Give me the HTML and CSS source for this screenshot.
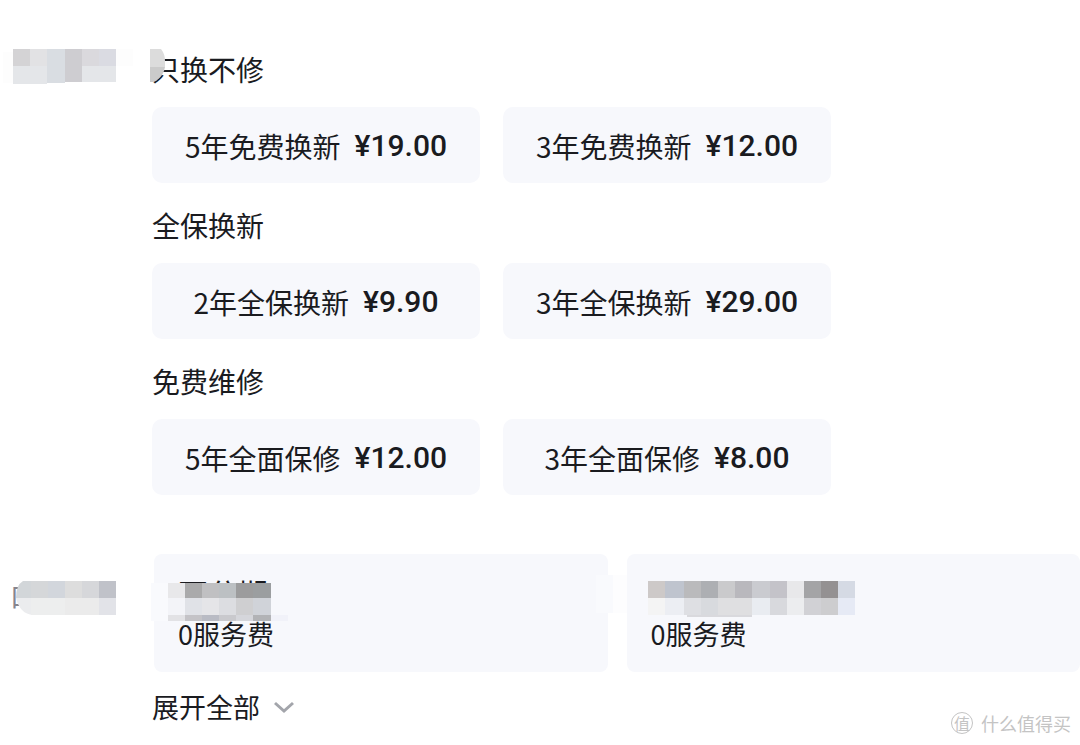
FILE: index.html
```html
<!DOCTYPE html>
<html lang="zh-CN">
<head>
<meta charset="utf-8">
<title>服务选择</title>
<link rel="stylesheet" href="styles.css">
</head>
<body>
<main class="page">
  <section class="row">
    <div class="row-label">
      <svg class="mosaic" width="133" height="35" viewBox="0 49 133 35" shape-rendering="crispEdges" aria-hidden="true">
        <path fill="#fdfdfd" d="M3 52h10v31H3zM116 49h17v17h-17z"/>
        <path fill="#d4d3d5" d="M13 49h17v17H13z"/><path fill="#e2e2e4" d="M30 49h17v17H30z"/><path fill="#d9dde2" d="M47 49h18v34H47z"/><path fill="#cecdd1" d="M65 49h17v33H65z"/><path fill="#dad9dd" d="M82 49h17v17H82z"/><path fill="#dadbe2" d="M99 49h17v17H99z"/>
        <path fill="#e4e6e9" d="M13 66h34v18H13zM82 66h34v16H82z"/>
      </svg>
    </div>
    <div class="plans">
      <h2 class="plan-title">只换不修
        <svg class="mosaic title-cover" width="16" height="34" viewBox="150 49 16 34" aria-hidden="true"><path fill="#dcdcdc" d="M150 49h11q4 5 4 12v6h-15z"/><path fill="#cbcbcb" d="M150 67h15q-1 8-9 14l-3 1h-3z"/></svg>
      </h2>
      <div class="options">
        <button class="option" type="button"><span>5年免费换新</span><span class="price">¥19.00</span></button>
        <button class="option" type="button"><span>3年免费换新</span><span class="price">¥12.00</span></button>
      </div>
      <h2 class="plan-title">全保换新</h2>
      <div class="options">
        <button class="option" type="button"><span>2年全保换新</span><span class="price">¥9.90</span></button>
        <button class="option" type="button"><span>3年全保换新</span><span class="price">¥29.00</span></button>
      </div>
      <h2 class="plan-title">免费维修</h2>
      <div class="options">
        <button class="option" type="button"><span>5年全面保修</span><span class="price">¥12.00</span></button>
        <button class="option" type="button"><span>3年全面保修</span><span class="price">¥8.00</span></button>
      </div>
    </div>
  </section>

  <section class="row finance">
    <div class="row-label finance-label">
      <span>口</span>
      <svg class="mosaic label-cover" width="100" height="34" viewBox="16 581 100 34" aria-hidden="true">
        <path fill="#d2d6d9" d="M23 581h8v17H16q0-13 7-17z"/><path fill="#ebecee" d="M16 598h17v17q-13-1-17-17z"/>
        <g shape-rendering="crispEdges"><path fill="#d5d7d9" d="M31 581h17v17H31z"/><path fill="#d2d6dc" d="M48 581h17v17H48z"/><path fill="#ddd" d="M65 581h17v17H65z"/><path fill="#d6d7da" d="M82 581h17v17H82z"/><path fill="#c0c2c9" d="M99 581h17v17H99z"/><path fill="#edeeee" d="M31 598h34v17H31z"/><path fill="#ebebeb" d="M65 598h34v17H65z"/><path fill="#e2e3e8" d="M99 598h17v17H99z"/></g>
      </svg>
    </div>
    <div class="finance-body">
      <div class="services">
        <button class="service" type="button">
          <span class="service-title">不分期</span>
          <span>0服务费</span>
          <svg class="mosaic service-cover" width="137" height="38" viewBox="151 583 137 38" shape-rendering="crispEdges" aria-hidden="true">
            <path fill="#f9fafd" d="M151 583h17v38h-17z"/><path fill="#f1f2f9" d="M271 615h17v6h-17z"/>
            <path fill="#e8e8ea" d="M168 583h17v15h-17z"/><path fill="#aaaaab" d="M185 583h17v15h-17z"/><path fill="#c0c0c2" d="M202 583h17v15h-17z"/><path fill="#bcc0c3" d="M219 583h17v15h-17z"/><path fill="#9c9c9d" d="M236 583h17v15h-17z"/><path fill="#9b9ea0" d="M253 583h18v15h-18z"/>
            <path fill="#f3f4f8" d="M168 598h17v17h-17z"/><path fill="#e0e2e7" d="M185 598h17v17h-17z"/><path fill="#e5e5e8" d="M202 598h17v17h-17z"/><path fill="#dcdde1" d="M219 598h17v17h-17z"/><path fill="#cfcfd1" d="M236 598h17v17h-17z"/><path fill="#d0d3d9" d="M253 598h18v17h-18z"/>
            <path fill="#e2e2e5" d="M168 615h17v6h-17z"/><path fill="#c4c3c7" d="M185 615h17v6h-17z"/><path fill="#b9bbc4" d="M202 615h17v6h-17z"/><path fill="#c9c9cd" d="M219 615h17v6h-17z"/><path fill="#d5d6db" d="M236 615h17v6h-17z"/><path fill="#b2b3b6" d="M253 615h18v6h-18z"/>
          </svg>
          <svg class="mosaic edge-cover" width="34" height="38" viewBox="0 0 34 38" aria-hidden="true"><path fill="#f9fafd" d="M0 0h17v38H0z"/><path fill="#fdfdfe" d="M17 0h17v38H17z"/></svg>
        </button>
        <button class="service" type="button">
          <span class="service-name">
            <svg class="mosaic" width="207" height="36" viewBox="648 581 207 36" shape-rendering="crispEdges" aria-hidden="true">
              <path fill="#cdc9c8" d="M648 581h17v17h-17z"/><path fill="#bfc4ce" d="M665 581h19v17h-19z"/><path fill="#bababc" d="M684 581h17v17h-17z"/><path fill="#adafb3" d="M701 581h17v17h-17z"/><path fill="#cacacc" d="M718 581h17v17h-17z"/><path fill="#b9b8bd" d="M735 581h17v17h-17z"/><path fill="#cacbd0" d="M752 581h18v17h-18z"/><path fill="#c4c3c9" d="M770 581h17v17h-17z"/><path fill="#e8e8ea" d="M787 581h17v17h-17z"/><path fill="#a4a4a6" d="M804 581h17v17h-17z"/><path fill="#949192" d="M821 581h17v17h-17z"/><path fill="#d5dae4" d="M838 581h17v17h-17z"/>
              <path fill="#f4f4f4" d="M648 598h17v17h-17z"/><path fill="#eceef3" d="M665 598h19v17h-19z"/><path fill="#dedfe3" d="M684 598h17v17h-17z"/><path fill="#d8dade" d="M701 598h17v17h-17z"/><path fill="#dfdfe1" d="M718 598h34v17h-34z"/><path fill="#e9ecf1" d="M752 598h18v17h-18z"/><path fill="#d8d9dd" d="M770 598h17v17h-17z"/><path fill="#ecedef" d="M787 598h17v17h-17z"/><path fill="#d1d1d5" d="M804 598h17v17h-17z"/><path fill="#cdcdcf" d="M821 598h17v17h-17z"/><path fill="#e6eaf5" d="M838 598h17v17h-17z"/><path fill="#d9d9dd" d="M687 615h65v2h-65z"/>
            </svg>
          </span>
          <span>0服务费</span>
        </button>
      </div>
      <button class="expand" type="button">展开全部
        <svg width="22" height="14" viewBox="0 0 22 14" fill="none" stroke="#a3a5ab" stroke-width="3" aria-hidden="true"><path d="M2 3l9 8 9-8"/></svg>
      </button>
    </div>
  </section>
</main>
<div class="watermark"><span class="watermark-logo">值</span><span>什么值得买</span></div>
</body>
</html>
```
FILE: styles.css
```css
* {
  box-sizing: border-box;
}

body {
  margin: 0;
  min-height: 100vh;
  position: relative;
  background: #fff;
  color: #1a1b1f;
  font-family: "Noto Sans CJK SC", sans-serif;
}

button {
  border: 0;
  padding: 0;
  color: inherit;
  font: inherit;
  cursor: pointer;
}

.page {
  padding: 49px 0 16px;
}

.row {
  display: grid;
  grid-template-columns: 152px minmax(0, 1fr);
}

.mosaic {
  display: block;
}

.plan-title {
  position: relative;
  margin: 0 0 18px;
  font-size: 28px;
  font-weight: 400;
  line-height: 40px;
}

.title-cover {
  position: absolute;
  top: 0;
  left: -2px;
}

.options {
  display: grid;
  grid-template-columns: repeat(2, minmax(0, 328px));
  gap: 23px;
  margin-bottom: 22px;
}

.option {
  display: flex;
  align-items: center;
  justify-content: center;
  gap: 14px;
  min-height: 76px;
  padding-top: 2px;
  border-radius: 10px;
  background: #f7f8fc;
  font-size: 28px;
  line-height: 40px;
  white-space: nowrap;
}

.price {
  font-family: Roboto, sans-serif;
  font-size: 30px;
  font-weight: 500;
}

.finance {
  margin-top: 37px;
}

.finance-label {
  position: relative;
  padding: 22px 0 0 10px;
  color: #85858f;
  font-size: 27px;
  line-height: 40px;
}

.label-cover {
  position: absolute;
  top: 27px;
  left: 16px;
}

.services {
  display: grid;
  grid-template-columns: repeat(2, minmax(0, 1fr));
  gap: 19px;
  padding-left: 2px;
}

.service {
  position: relative;
  display: flex;
  flex-direction: column;
  gap: 2px;
  padding: 18px 24px;
  border-radius: 8px;
  background: #f7f8fc;
  font-size: 27px;
  line-height: 40px;
  text-align: left;
}

.service-title {
  font-size: 30px;
}

.service-name {
  height: 40px;
  padding-top: 9px;
  margin-left: -3px;
}

.service-cover {
  position: absolute;
  top: 29px;
  left: -3px;
}

.edge-cover {
  position: absolute;
  top: 21px;
  right: -22px;
}

.expand {
  display: flex;
  align-items: center;
  gap: 13px;
  margin-top: 15px;
  background: none;
  font-size: 27px;
  line-height: 40px;
}

.watermark {
  position: absolute;
  right: 9px;
  bottom: 9px;
  display: flex;
  align-items: center;
  gap: 8px;
  color: #c4c4c4;
  font-size: 18px;
  line-height: 26px;
}

.watermark-logo {
  width: 22px;
  height: 22px;
  border: 1px solid #c4c4c4;
  border-radius: 50%;
  font-size: 16px;
  line-height: 20px;
  text-align: center;
}
```
